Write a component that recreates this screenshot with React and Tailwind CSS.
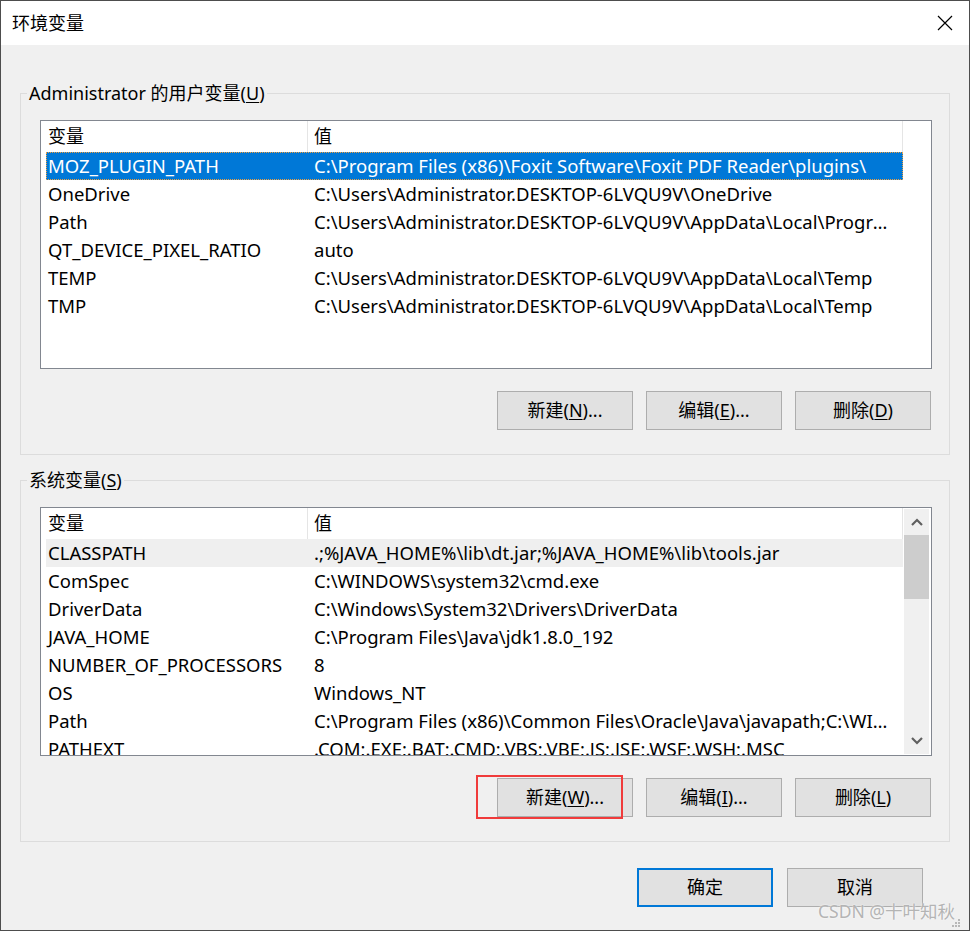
import React from "react";

const userVars = [
  { name: "MOZ_PLUGIN_PATH", value: "C:\\Program Files (x86)\\Foxit Software\\Foxit PDF Reader\\plugins\\" },
  { name: "OneDrive", value: "C:\\Users\\Administrator.DESKTOP-6LVQU9V\\OneDrive" },
  { name: "Path", value: "C:\\Users\\Administrator.DESKTOP-6LVQU9V\\AppData\\Local\\Programs\\Microsoft VS Code\\bin" },
  { name: "QT_DEVICE_PIXEL_RATIO", value: "auto" },
  { name: "TEMP", value: "C:\\Users\\Administrator.DESKTOP-6LVQU9V\\AppData\\Local\\Temp" },
  { name: "TMP", value: "C:\\Users\\Administrator.DESKTOP-6LVQU9V\\AppData\\Local\\Temp" },
];

const systemVars = [
  { name: "CLASSPATH", value: ".;%JAVA_HOME%\\lib\\dt.jar;%JAVA_HOME%\\lib\\tools.jar" },
  { name: "ComSpec", value: "C:\\WINDOWS\\system32\\cmd.exe" },
  { name: "DriverData", value: "C:\\Windows\\System32\\Drivers\\DriverData" },
  { name: "JAVA_HOME", value: "C:\\Program Files\\Java\\jdk1.8.0_192" },
  { name: "NUMBER_OF_PROCESSORS", value: "8" },
  { name: "OS", value: "Windows_NT" },
  { name: "Path", value: "C:\\Program Files (x86)\\Common Files\\Oracle\\Java\\javapath;C:\\WINDOWS\\system32;C:\\WINDOWS" },
  { name: "PATHEXT", value: ".COM;.EXE;.BAT;.CMD;.VBS;.VBE;.JS;.JSE;.WSF;.WSH;.MSC" },
];

const font = { fontFamily: '"Noto Sans", "Noto Sans CJK SC", sans-serif' };

// label like "新建(N)..." with the mnemonic letter underlined
const Mnemonic = ({ text, letter, tail = "" }) => (
  <span>
    {text}(<span className="underline underline-offset-2">{letter}</span>){tail}
  </span>
);

const WinButton = ({ children, primary }) => (
  <button
    className={
      "w-[136px] h-[39px] bg-[#e1e1e1] text-[18px] text-black flex items-center justify-center " +
      (primary ? "border-2 border-[#0078d7]" : "border border-[#adadad]")
    }
  >
    {children}
  </button>
);

const Chevron = ({ up }) => (
  <svg width="12" height="8" viewBox="0 0 12 8">
    <path
      d={up ? "M1 7 L6 2 L11 7" : "M1 1 L6 6 L11 1"}
      fill="none"
      stroke="#606060"
      strokeWidth="2.2"
    />
  </svg>
);

const Row = ({ item, selected, inactive }) => (
  <div
    className={
      "ml-[5px] w-[857px] h-[28px] shrink-0 grid grid-cols-[266px_1fr] items-center " +
      (selected
        ? "bg-[#0078d7] text-white outline outline-1 outline-dotted outline-offset-[-1px] outline-[#f0a040]"
        : inactive
        ? "bg-[#efefef] text-black"
        : "text-black")
    }
  >
    <div className="pl-[2px] whitespace-nowrap overflow-hidden">{item.name}</div>
    <div className="pl-[2px] pr-[6px] whitespace-nowrap overflow-hidden text-ellipsis">{item.value}</div>
  </div>
);

const VarList = ({ items, selectedIndex, inactiveIndex, scroll }) => (
  <div className="w-[892px] h-[249px] border border-[#828790] bg-white flex overflow-hidden">
    <div className="w-[862px] flex flex-col">
      <div className="h-[31px] shrink-0 flex text-[18px]">
        <div className="w-[267px] pl-[7px] flex items-center border-r border-[#e5e5e5]">变量</div>
        <div className="w-[595px] pl-[6px] flex items-center border-r border-[#e5e5e5]">值</div>
      </div>
      {items.map((item, i) => (
        <Row key={item.name + i} item={item} selected={i === selectedIndex} inactive={i === inactiveIndex} />
      ))}
    </div>
    {scroll && (
      <div className="ml-[1px] mt-[1px] mb-[1px] w-[25px] bg-[#f0f0f0] flex flex-col">
        <div className="h-[26px] flex items-center justify-center">
          <Chevron up />
        </div>
        <div className="h-[64px] bg-[#cdcdcd]" />
        <div className="flex-1" />
        <div className="h-[26px] flex items-center justify-center">
          <Chevron />
        </div>
      </div>
    )}
  </div>
);

const GroupBox = ({ legend, children }) => (
  <fieldset className="mx-[19px] border border-[#dcdcdc] pl-[19px] pr-[17px] pt-[15px] pb-[24px]">
    <legend className="ml-[-13px] px-[2px] h-[24px] leading-[24px] text-[18px] text-black">{legend}</legend>
    {children}
  </fieldset>
);

export default function App() {
  return (
    <div
      className="relative w-[970px] h-[931px] border border-[#4d4d4d] bg-[#f0f0f0] flex flex-col text-[18.5px] text-black"
      style={font}
    >
      {/* title bar */}
      <div className="h-[44px] bg-white flex items-center justify-between pl-[11px] pr-[16px] shrink-0">
        <span className="text-[18px]">环境变量</span>
        <svg width="16" height="16" viewBox="0 0 16 16">
          <path d="M1 1 L15 15 M15 1 L1 15" stroke="#000" strokeWidth="1.2" />
        </svg>
      </div>

      <div className="mt-[36px]">
        <GroupBox legend={<Mnemonic text="Administrator 的用户变量" letter="U" />}>
          <VarList items={userVars} selectedIndex={0} />
          <div className="mt-[22px] flex justify-end gap-[13px] pr-[1px]">
            <WinButton><Mnemonic text="新建" letter="N" tail="..." /></WinButton>
            <WinButton><Mnemonic text="编辑" letter="E" tail="..." /></WinButton>
            <WinButton><Mnemonic text="删除" letter="D" /></WinButton>
          </div>
        </GroupBox>
      </div>

      <div className="mt-[13px]">
        <GroupBox legend={<Mnemonic text="系统变量" letter="S" />}>
          <VarList items={systemVars} inactiveIndex={0} scroll />
          <div className="mt-[22px] flex justify-end gap-[13px] pr-[1px]">
            <div className="relative">
              <WinButton><Mnemonic text="新建" letter="W" tail="..." /></WinButton>
              <div className="absolute left-[-21px] top-[-3px] w-[147px] h-[44px] border-[2.5px] border-[#f03b3b] pointer-events-none" />
            </div>
            <WinButton><Mnemonic text="编辑" letter="I" tail="..." /></WinButton>
            <WinButton><Mnemonic text="删除" letter="L" /></WinButton>
          </div>
        </GroupBox>
      </div>

      <div className="mt-[26px] flex justify-end gap-[14px] pr-[46px]">
        <WinButton primary>确定</WinButton>
        <WinButton>取消</WinButton>
      </div>

      {/* watermark */}
      <div className="absolute right-[14px] bottom-[6px] text-[17.5px] text-[#b4b4b4] [text-shadow:0_0_2px_#ffffff]">
        CSDN @十叶知秋
      </div>

      {/* size grip */}
      <svg className="absolute right-[8px] bottom-[2px]" width="10" height="10" viewBox="0 0 10 10">
        <rect x="7" y="1" width="2" height="2" fill="#b8b8b8" />
        <rect x="4" y="4" width="2" height="2" fill="#b8b8b8" />
        <rect x="7" y="4" width="2" height="2" fill="#b8b8b8" />
        <rect x="1" y="7" width="2" height="2" fill="#b8b8b8" />
        <rect x="4" y="7" width="2" height="2" fill="#b8b8b8" />
        <rect x="7" y="7" width="2" height="2" fill="#b8b8b8" />
      </svg>
    </div>
  );
}
